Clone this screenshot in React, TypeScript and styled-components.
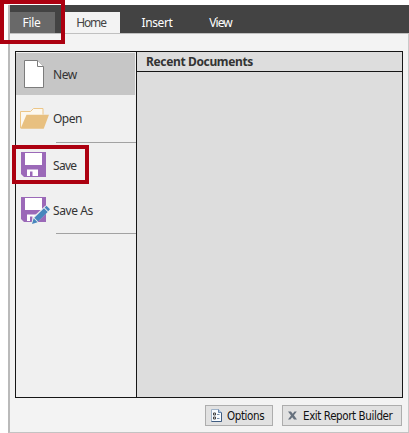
import React from "react";
import styled, { createGlobalStyle } from "styled-components";

const GlobalStyle = createGlobalStyle`
  * { box-sizing: border-box; }
  body { margin: 0; background: #fff; overflow: hidden; }
`;

const Page = styled.div`
  position: relative;
  width: 409px;
  height: 433px;
  padding: 5px 0 0 8px;
  font-family: "Noto Sans", "Open Sans", sans-serif;
  font-size: 12px;
  color: #333;
`;

const Window = styled.div`
  display: flex;
  flex-direction: column;
  height: 428px;
  background: #f3f3f3;
  border-left: 2px solid #bababa;
  border-bottom: 1px solid #c3c3c3;
`;

const TabBar = styled.nav`
  display: flex;
  align-items: flex-end;
  flex: none;
  height: 28px;
  background: #434343;
`;

const Tab = styled.div<{ $width: number; $tone?: "file" | "active"; $gap?: number; $spacing?: number }>`
  width: ${(p) => p.$width}px;
  height: 21px;
  margin-left: ${(p) => p.$gap ?? 0}px;
  padding-right: ${(p) => (p.$tone ? 2 : 0)}px;
  text-align: center;
  line-height: 22px;
  letter-spacing: ${(p) => p.$spacing ?? 0}px;
  color: ${(p) => (p.$tone === "active" ? "#444" : "#fff")};
  background: ${(p) => (p.$tone === "file" ? "#696969" : p.$tone === "active" ? "#f3f3f3" : "transparent")};
`;

const Body = styled.main`
  flex: 1;
  display: flex;
  flex-direction: column;
  padding: 17px 5px 0 5px;
  border-top: 1px solid #c0c0c0;
  border-right: 1px solid #c9c9c9;
`;

const Panel = styled.section`
  display: flex;
  height: 347px;
  border: 1px solid #161616;
  background: #f0f0f0;
`;

const Menu = styled.div`
  width: 120px;
  padding-top: 1px;
`;

const MenuItem = styled.div<{ $height: number; $selected?: boolean }>`
  display: flex;
  align-items: center;
  height: ${(p) => p.$height}px;
  width: 119px;
  padding-left: 4px;
  background: ${(p) => (p.$selected ? "#c6c6c6" : "transparent")};
`;

const ItemLabel = styled.span<{ $spacing?: number }>`
  margin-left: 3px;
  letter-spacing: ${(p) => p.$spacing ?? 0}px;
`;

const Divider = styled.div`
  height: 1px;
  margin-left: 40px;
  background: #a2a2a2;
`;

const Recent = styled.div`
  flex: 1;
  border-left: 1px solid #161616;
  background: #ddd;
`;

const RecentHeader = styled.div`
  height: 20px;
  padding-left: 9px;
  border-bottom: 1px solid #161616;
  font-weight: 700;
  line-height: 20px;
  letter-spacing: -0.36px;
`;

const Footer = styled.footer`
  display: flex;
  justify-content: flex-end;
  gap: 9px;
  padding-top: 7px;
  padding-right: 1px;
`;

const Button = styled.button<{ $width: number; $spacing: number; $gap: number }>`
  display: flex;
  align-items: center;
  gap: ${(p) => p.$gap}px;
  width: ${(p) => p.$width}px;
  height: 21px;
  padding: 0 0 0 4px;
  border: 1px solid #adadad;
  background: #e1e1e1;
  color: #111;
  font: 11.5px "DejaVu Sans Condensed", "DejaVu Sans", sans-serif;
  font-stretch: condensed;
  letter-spacing: ${(p) => p.$spacing}px;
  white-space: nowrap;
`;

const Highlight = styled.div<{ $x: number; $y: number; $w: number; $h: number }>`
  position: absolute;
  left: ${(p) => p.$x}px;
  top: ${(p) => p.$y}px;
  width: ${(p) => p.$w}px;
  height: ${(p) => p.$h}px;
  border: 4px solid #ac0010;
  pointer-events: none;
`;

const Glyph = styled.svg`
  display: block;
  flex: none;
`;

const NewIcon = () => (
  <Glyph width="30" height="30" viewBox="0 0 30 30">
    <path d="M4.500 1.500h13l6 6v21h-19z" fill="#fff" stroke="#7c7c7c" />
    <path d="M17.500 1.500v6h6" fill="#fff" stroke="#7c7c7c" />
  </Glyph>
);

const OpenIcon = () => (
  <Glyph width="30" height="30" viewBox="0 0 30 30">
    <path d="M.5 24V7.500h10l3-3h9.500v6" fill="#fcf8f0" stroke="#ecc688" />
    <path d="M6.500 10.800H29L23.700 24.700H.5z" fill="#e8c080" />
  </Glyph>
);

const Disk = () => (
  <>
    <path d="M1 2h25v25H4l-3-3z" fill="#9b69b8" />
    <path d="M5 3h17v12H5z" fill="#fff" />
    <path d="M7 19.500h11v6.500h-5.500v-4.500h-2.500v4.500H7z" fill="#fff" />
  </>
);

const SaveIcon = () => (
  <Glyph width="30" height="30" viewBox="0 0 30 30">
    <Disk />
  </Glyph>
);

const SaveAsIcon = () => (
  <Glyph width="30" height="30" viewBox="0 0 30 30">
    <Disk />
    <path d="M11 29.500l2-7.500L25.500 10.500l4.500 4-12.500 12.500z" fill="#f0f0f0" />
    <path d="M12 29l1.700-5.700 3.900 3.900zM14.300 22.700l9.700-9.400 3.700 3.700-9.600 9.600zM24.600 12.600l1.900-1.900 3.500 3.500-1.800 2z" fill="#4786bd" />
  </Glyph>
);

const OptionsIcon = () => (
  <Glyph width="13" height="15" viewBox="0 0 13 15">
    <path d="M1.500 1.500h7l3 3v9h-10z" fill="#f7fbff" stroke="#9fb3ca" />
    <path d="M11.500 4.500v9h-10" fill="none" stroke="#405c80" />
    <path d="M8.500 1.500v3h3" fill="#a9c3e0" stroke="#6583a8" />
    <path d="M3.500 5h2v2h-2zM3.500 9h2v2h-2z" fill="none" stroke="#444" />
    <path d="M7 6.500h2.500M7 10.500h2.500" stroke="#7890ac" />
  </Glyph>
);

const CloseIcon = () => (
  <Glyph width="11" height="11" viewBox="0 0 11 11">
    <path d="M1 1.500h3l1.700 2.200 1.800-2.200h2.300L6.900 5.300l3.100 4.200H7L5.200 7.200 3.300 9.500H1l3-4z" fill="#66717e" />
  </Glyph>
);

export default function App() {
  return (
    <Page>
      <GlobalStyle />
      <Window>
        <TabBar>
          <Tab $width={45} $tone="file" $spacing={-0.3}>File</Tab>
          <Tab $width={56} $gap={9} $tone="active" $spacing={-1.1}>Home</Tab>
          <Tab $width={74} $spacing={-0.4}>Insert</Tab>
          <Tab $width={53} $spacing={-0.9}>View</Tab>
        </TabBar>
        <Body>
          <Panel>
            <Menu>
              <MenuItem $height={42} $selected>
                <NewIcon />
                <ItemLabel $spacing={-0.4}>New</ItemLabel>
              </MenuItem>
              <MenuItem $height={47}>
                <OpenIcon />
                <ItemLabel $spacing={-0.5}>Open</ItemLabel>
              </MenuItem>
              <Divider />
              <MenuItem $height={44}>
                <SaveIcon />
                <ItemLabel $spacing={-0.7}>Save</ItemLabel>
              </MenuItem>
              <MenuItem $height={46}>
                <SaveAsIcon />
                <ItemLabel $spacing={-0.4}>Save As</ItemLabel>
              </MenuItem>
              <Divider />
            </Menu>
            <Recent>
              <RecentHeader>Recent Documents</RecentHeader>
            </Recent>
          </Panel>
          <Footer>
            <Button $width={68} $gap={4} $spacing={-0.4}>
              <OptionsIcon />
              Options
            </Button>
            <Button $width={120} $gap={5} $spacing={-0.4}>
              <CloseIcon />
              Exit Report Builder
            </Button>
          </Footer>
        </Body>
      </Window>
      <Highlight $x={0} $y={0} $w={65} $h={44} />
      <Highlight $x={12} $y={145} $w={77} $h={39} />
    </Page>
  );
}
